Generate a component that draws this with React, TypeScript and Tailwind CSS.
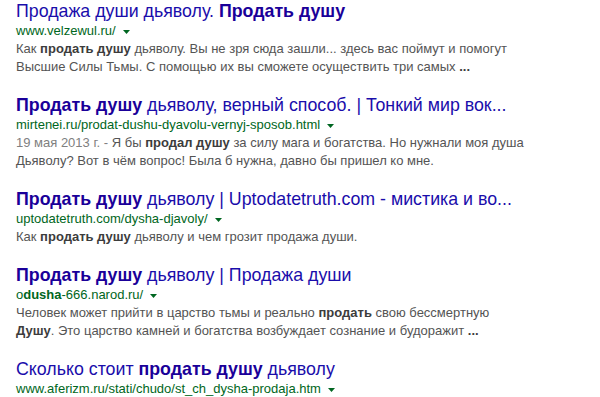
import type { ReactNode } from 'react'

type Result = {
  title: ReactNode
  url: ReactNode
  snippet: ReactNode
}

const results: Result[] = [
  {
    title: (
      <>
        Продажа души дьяволу. <b>Продать душу</b>
      </>
    ),
    url: 'www.velzewul.ru/',
    snippet: (
      <>
        Как <b>продать душу</b> дьяволу. Вы не зря сюда зашли... здесь вас поймут и помогут
        <br />
        Высшие Силы Тьмы. С помощью их вы сможете осуществить три самых <b>...</b>
      </>
    ),
  },
  {
    title: (
      <>
        <b>Продать душу</b> дьяволу, верный способ. | Тонкий мир вок...
      </>
    ),
    url: 'mirtenei.ru/prodat-dushu-dyavolu-vernyj-sposob.html',
    snippet: (
      <>
        <span className="text-[#808080]">19 мая 2013 г. - </span>Я бы <b>продал душу</b> за силу мага и
        богатства. Но нужнали моя душа
        <br />
        Дьяволу? Вот в чём вопрос! Была б нужна, давно бы пришел ко мне.
      </>
    ),
  },
  {
    title: (
      <>
        <b>Продать душу</b> дьяволу | Uptodatetruth.com - мистика и во...
      </>
    ),
    url: 'uptodatetruth.com/dysha-djavoly/',
    snippet: (
      <>
        Как <b>продать душу</b> дьяволу и чем грозит продажа души.
      </>
    ),
  },
  {
    title: (
      <>
        <b>Продать душу</b> дьяволу | Продажа души
      </>
    ),
    url: (
      <>
        o<b>dusha</b>-666.narod.ru/
      </>
    ),
    snippet: (
      <>
        Человек может прийти в царство тьмы и реально <b>продать</b> свою бессмертную
        <br />
        <b>Душу</b>. Это царство камней и богатства возбуждает сознание и будоражит <b>...</b>
      </>
    ),
  },
  {
    title: (
      <>
        Сколько стоит <b>продать душу</b> дьяволу
      </>
    ),
    url: 'www.aferizm.ru/stati/chudo/st_ch_dysha-prodaja.htm',
    snippet: null,
  },
]

function Arrow() {
  return (
    <svg width="7" height="4" viewBox="0 0 7 4" className="ml-[7px] inline-block align-middle">
      <path d="M0 0h7L3.5 4z" fill="#006621" />
    </svg>
  )
}

export default function App() {
  return (
    <div
      className="h-[397px] w-[600px] overflow-hidden bg-white pl-4 pt-[1px]"
      style={{ fontFamily: '"Liberation Sans", Arial, sans-serif' }}
    >
      <div className="flex flex-col gap-[19px]">
        {results.map((r, i) => (
          <div key={i} className="flex flex-col">
            <div className="h-[21px] text-[17.8px] leading-[21px] whitespace-nowrap text-[#1a0dab] [&_b]:text-[#1a0099]">
              {r.title}
            </div>
            <div className="h-[18px] text-[13px] leading-[18px] whitespace-nowrap text-[#006621]">
              {r.url}
              <Arrow />
            </div>
            {r.snippet && (
              <div className="text-[13px] leading-[18px] whitespace-nowrap text-[#545454] [&_b]:text-[#3c3c3c]">
                {r.snippet}
              </div>
            )}
          </div>
        ))}
      </div>
    </div>
  )
}
